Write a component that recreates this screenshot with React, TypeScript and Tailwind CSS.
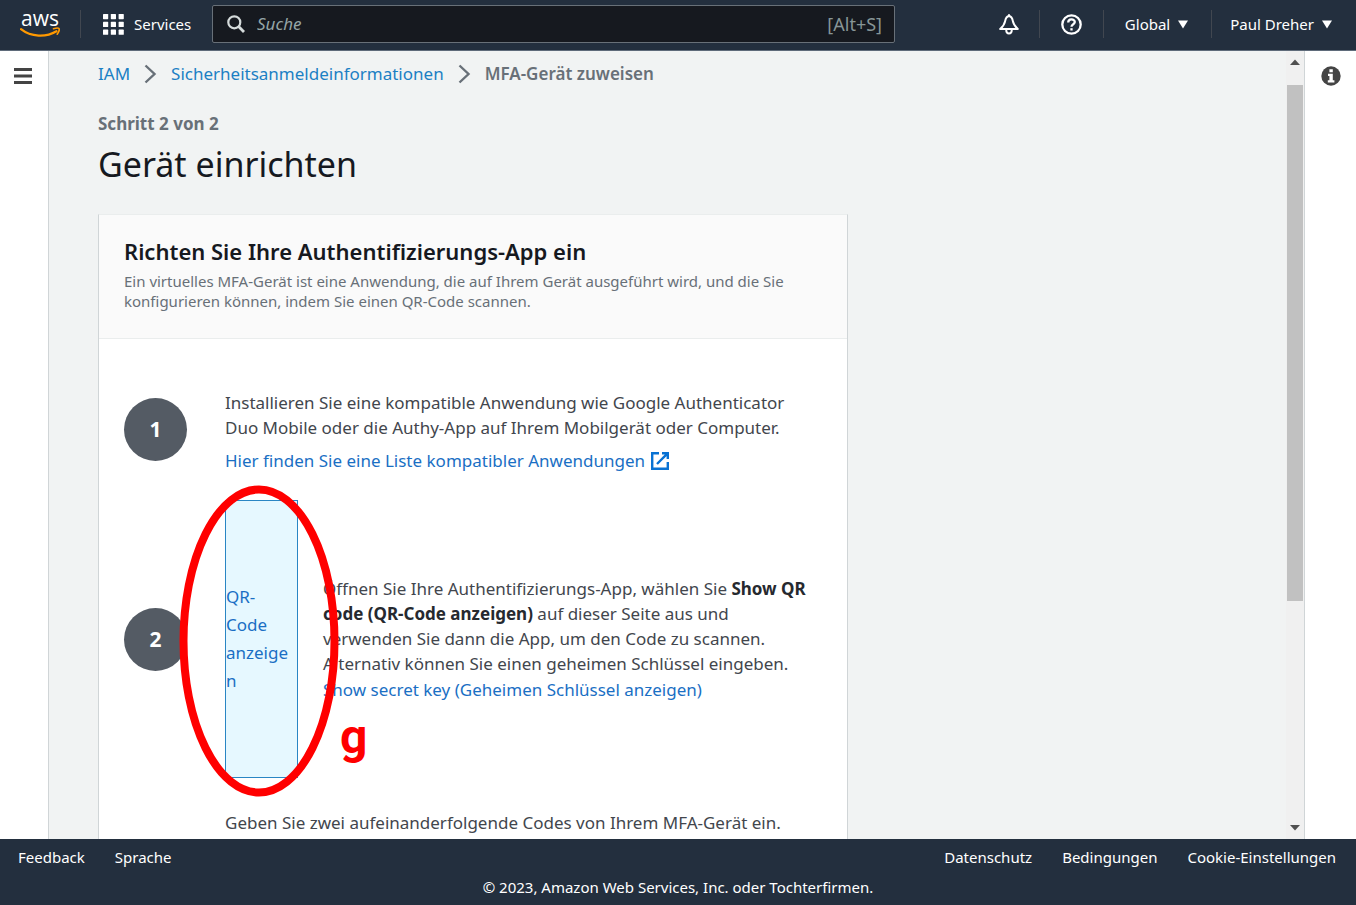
import type { ReactNode } from "react";

const breadcrumbs = [
  { label: "IAM", href: "#iam" },
  { label: "Sicherheitsanmeldeinformationen", href: "#security" },
];

const footerLeft = ["Feedback", "Sprache"];
const footerRight = ["Datenschutz", "Bedingungen", "Cookie-Einstellungen"];

function AwsLogo() {
  return (
    <a href="#home" aria-label="aws" className="flex w-10 flex-col items-center">
      <span className="h-4 font-['Open_Sans',sans-serif] text-[21px] font-medium leading-[14px] text-white">aws</span>
      <svg width="40" height="11" viewBox="0 0 40 11" fill="none" stroke="#ff9900" className="block">
        <path d="M1 2.2C11 10.2 26 10.6 36.5 4.2" strokeWidth="2.2" strokeLinecap="round" />
        <path d="M33.5 1.8C36 1 38.5 1 39 1.6C39.5 2.4 38.8 5.2 37.2 7.2" strokeWidth="1.6" strokeLinecap="round" />
      </svg>
    </a>
  );
}

function Divider() {
  return <div className="h-7 w-px bg-[#414750]" />;
}

function Caret() {
  return (
    <svg width="10" height="9" viewBox="0 0 10 9" fill="#fff">
      <path d="M0 0.5H10L5 8.5Z" />
    </svg>
  );
}

function Chevron() {
  return (
    <svg width="13" height="20" viewBox="0 0 13 20" fill="none" stroke="#687078" strokeWidth="2.4">
      <path d="M1.5 1.5L10.5 10L1.5 18.5" />
    </svg>
  );
}

function TopBar() {
  return (
    <header className="flex h-[51px] shrink-0 items-center border-b border-[#5f6b7a] bg-[#232f3e] pb-0.5 pl-5 pr-6 text-[15px] text-white">
      <AwsLogo />
      <div className="ml-5 flex items-center gap-[22px]">
        <Divider />
        <button className="flex w-[110px] items-center gap-2.5">
          <svg width="21" height="21" viewBox="0 0 21 21" fill="#fff">
            {[0, 7.8, 15.6].map((y) =>
              [0, 7.8, 15.6].map((x) => (
                <rect key={`${x}-${y}`} x={x} y={y} width="5.2" height="5.2" rx="0.6" />
              ))
            )}
          </svg>
          Services
        </button>
      </div>
      <label className="-ml-px flex h-[38px] w-[683px] items-center gap-3 rounded-xs border border-[#687078] bg-[#16191f] pl-3.5 pr-3">
        <svg width="18" height="18" viewBox="0 0 18 18" fill="none" stroke="#d5dbdb" strokeWidth="2.2">
          <circle cx="7.3" cy="7.3" r="6" />
          <path d="M11.6 11.6L17 17" strokeWidth="2.8" />
        </svg>
        <input
          type="search"
          aria-label="Suche"
          placeholder="Suche"
          className="min-w-0 flex-1 bg-transparent text-[17px] italic outline-none placeholder:text-[#95a5a6]"
        />
        <span className="text-lg text-[#879596]">[Alt+S]</span>
      </label>
      <div className="ml-auto flex items-center">
        <button aria-label="Benachrichtigungen" className="mr-5">
          <svg width="20" height="21" viewBox="0 0 20 21" fill="none" stroke="#fff" strokeWidth="2" strokeLinejoin="round">
            <path d="M10 2C7.6 2.4 6.6 4.4 6.2 6.8C5.6 10.4 4.2 12.2 1.2 15H18.8C15.8 12.2 14.4 10.4 13.8 6.8C13.4 4.4 12.4 2.4 10 2Z" />
            <path d="M7.2 15.4C7.2 20.8 12.8 20.8 12.8 15.4" />
            <path d="M10 0.3V2.5" />
          </svg>
        </button>
        <Divider />
        <button aria-label="Hilfe" className="mx-[21px]">
          <svg width="21" height="21" viewBox="0 0 21 21" fill="none" stroke="#fff" strokeWidth="2.3">
            <circle cx="10.5" cy="10.5" r="9.2" />
            <path d="M7.2 8.6C7.2 4.4 13.8 4.5 13.8 8.1C13.8 10.3 10.5 10.1 10.5 12.8" />
            <path d="M10.5 14.2V16.5" />
          </svg>
        </button>
        <Divider />
        <button className="ml-[21px] mr-[23px] flex items-center gap-2">
          Global <Caret />
        </button>
        <Divider />
        <button className="ml-[18px] flex items-center gap-2">
          Paul Dreher <Caret />
        </button>
      </div>
    </header>
  );
}

function StepBadge({ children }: { children: ReactNode }) {
  return (
    <div className="flex size-[63px] shrink-0 items-center justify-center rounded-full bg-[#545b64] text-[21px] font-bold text-white">
      {children}
    </div>
  );
}

// Red ring and letter laid over the QR code button
function Marker() {
  return (
    <div className="pointer-events-none absolute -left-[46px] -top-[15px]">
      <svg width="160" height="312" viewBox="0 0 160 312" fill="none" stroke="#ff0000" strokeWidth="8">
        <ellipse cx="80" cy="156" rx="75.5" ry="151.5" />
      </svg>
      <span className="absolute left-[161px] top-[224px] font-['Roboto',sans-serif] text-5xl font-bold leading-[56px] text-[#ff0000]">
        g
      </span>
    </div>
  );
}

function SetupCard() {
  return (
    <section className="w-[750px] border-x border-t border-x-[#d0d5d7] border-t-[#eaeded] bg-white">
      <div className="h-[124px] border-b border-[#eaeded] bg-[#fafafa] px-[25px] pt-5">
        <h2 className="text-[22px] font-semibold leading-8 text-[#16191f]">Richten Sie Ihre Authentifizierungs-App ein</h2>
        <p className="mt-1 text-[15px] leading-5 text-[#687078]">
          Ein virtuelles MFA-Gerät ist eine Anwendung, die auf Ihrem Gerät ausgeführt wird, und die Sie
          <br />
          konfigurieren können, indem Sie einen QR-Code scannen.
        </p>
      </div>
      <ol className="px-[25px] text-[17px] leading-[25px] text-[#42464d]">
        <li className="flex gap-[38px] pt-[51px]">
          <div className="pt-2">
            <StepBadge>1</StepBadge>
          </div>
          <div>
            <p>
              Installieren Sie eine kompatible Anwendung wie Google Authenticator
              <br />
              Duo Mobile oder die Authy-App auf Ihrem Mobilgerät oder Computer.
            </p>
            <a href="#apps" className="mt-2 flex items-center gap-1.5 text-[#1a6fc4]">
              Hier finden Sie eine Liste kompatibler Anwendungen
              <svg width="18" height="18" viewBox="0 0 18 18" fill="none" stroke="#0972d3" strokeWidth="2.4">
                <path d="M8 1.2H1.2V16.8H16.8V10" />
                <path d="M11 1.2H16.8V7M16.8 1.2L6 12" />
              </svg>
            </a>
          </div>
        </li>
        <li className="flex items-center gap-[38px] pt-[27px]">
          <StepBadge>2</StepBadge>
          <div className="flex items-center gap-[25px]">
            <div className="relative">
              <button className="block h-[278px] w-[73px] border border-[#2a86c4] bg-[#e6f8ff] pr-1.5 text-left leading-7 text-[#1a6fc4] wrap-break-word">
                QR-Code anzeigen
              </button>
              <Marker />
            </div>
            <div>
              <p>
                Öffnen Sie Ihre Authentifizierungs-App, wählen Sie <b className="text-[#26292f]">Show QR</b>
                <br />
                <b className="text-[#26292f]">code (QR-Code anzeigen)</b> auf dieser Seite aus und
                <br />
                verwenden Sie dann die App, um den Code zu scannen.
                <br />
                Alternativ können Sie einen geheimen Schlüssel eingeben.
              </p>
              <a href="#secret" className="mt-px block text-[#1a6fc4]">
                Show secret key (Geheimen Schlüssel anzeigen)
              </a>
            </div>
          </div>
        </li>
        <li className="pb-10 pl-[101px] pt-8">Geben Sie zwei aufeinanderfolgende Codes von Ihrem MFA-Gerät ein.</li>
      </ol>
    </section>
  );
}

function Scrollbar() {
  return (
    <div className="flex w-[18px] shrink-0 flex-col items-center bg-[#f0f0f0]">
      <svg width="10" height="34" viewBox="0 0 10 34" fill="#505050" className="shrink-0">
        <path d="M0 14L5 8.5L10 14Z" />
      </svg>
      <div className="w-4 flex-[517] bg-[#c1c1c1]" />
      <div className="flex-[220]" />
      <svg width="10" height="18" viewBox="0 0 10 18" fill="#505050" className="shrink-0">
        <path d="M0 4L5 9.5L10 4Z" />
      </svg>
    </div>
  );
}

function Footer() {
  return (
    <footer className="h-[66px] shrink-0 bg-[#232f3e] px-[18px] pt-2 text-[15px] leading-5 text-white">
      <div className="flex justify-between pr-0.5">
        <div className="flex gap-[30px]">
          {footerLeft.map((label) => (
            <a key={label} href="#footer">{label}</a>
          ))}
        </div>
        <div className="flex gap-[30px]">
          {footerRight.map((label) => (
            <a key={label} href="#footer">{label}</a>
          ))}
        </div>
      </div>
      <p className="mt-2.5 text-center">© 2023, Amazon Web Services, Inc. oder Tochterfirmen.</p>
    </footer>
  );
}

function App() {
  return (
    <div className="flex h-screen flex-col overflow-hidden bg-white font-['Noto_Sans',sans-serif]">
      <TopBar />
      <div className="flex min-h-0 flex-1">
        <nav className="w-[49px] shrink-0 border-r border-[#d0d5d7] pl-3.5 pt-[17px]">
          <button aria-label="Menü" className="block">
            <svg width="18" height="16" viewBox="0 0 18 16" fill="#444">
              <path d="M0 0H18V3H0ZM0 6.5H18V9.5H0ZM0 13H18V16H0Z" />
            </svg>
          </button>
        </nav>
        <main className="min-w-0 flex-1 overflow-hidden bg-[#f1f3f3] pl-[49px] pt-[10px]">
          <nav className="flex items-center gap-3.5 text-[17px] leading-[26px]">
            {breadcrumbs.map((item) => (
              <div key={item.label} className="flex items-center gap-3.5">
                <a href={item.href} className="text-[#1b80c4]">{item.label}</a>
                <Chevron />
              </div>
            ))}
            <span className="font-semibold text-[#687078]">MFA-Gerät zuweisen</span>
          </nav>
          <p className="mt-6 text-[17px] font-bold leading-[26px] text-[#687078]">Schritt 2 von 2</p>
          <h1 className="mb-[29px] mt-1.5 text-[34px] leading-[42px] text-[#16191f]">Gerät einrichten</h1>
          <SetupCard />
        </main>
        <Scrollbar />
        <aside className="w-[52px] shrink-0 border-l border-[#d0d5d7] pl-4 pt-[15px]">
          <button aria-label="Info" className="block">
            <svg width="20" height="20" viewBox="0 0 20 20" fill="#444">
              <circle cx="10" cy="10" r="9.7" />
              <path d="M8.4 3.2H11.8V6.3H8.4ZM7 7.8H11.8V14.2H13.4V16.4H6.8V14.2H8.4V10H7Z" fill="#fff" />
            </svg>
          </button>
        </aside>
      </div>
      <Footer />
    </div>
  );
}

export default App;
